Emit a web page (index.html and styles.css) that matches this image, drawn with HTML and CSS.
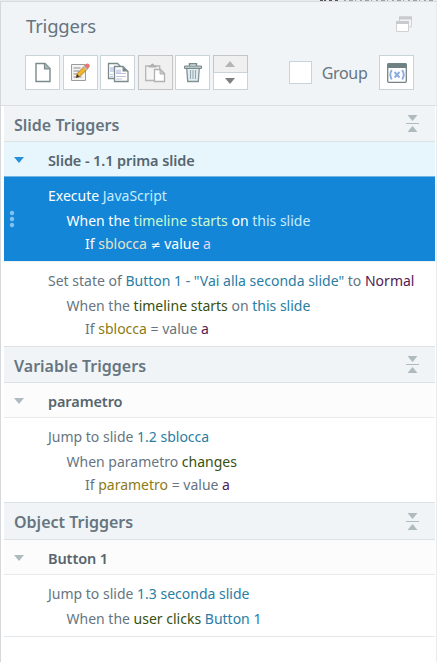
FILE: index.html
```html
<!DOCTYPE html>
<html lang="en">
<head>
  <meta charset="UTF-8">
  <meta name="viewport" content="width=device-width, initial-scale=1.0">
  <title>Triggers</title>
  <link rel="stylesheet" href="styles.css">
</head>
<body>
  <div class="window-edge">
    <svg width="117" height="2" viewBox="0 0 117 2"><path d="M0 .5h6M9 .5h4M15 .5h4" stroke="#555" stroke-dasharray="3 1"/><path d="M24 .5h90" stroke="#9aa0a5" stroke-dasharray="2 3 4 2 1 4"/></svg>
  </div>
  <div class="panel">
    <header class="panel-header">
      <div class="title-row">
        <h1>Triggers</h1>
        <svg class="float-icon" width="16" height="17" viewBox="0 0 16 17"><path d="M3.5 5V.8h12v10H13" fill="#f3f4f5" stroke="#d0d2d4"/><path d="M3 2h13" stroke="#c8cbcd" stroke-width="3"/><path d="M.5 5.5h12v10H.5z" fill="#fff" stroke="#cfd1d3"/><path d="M0 6.5h13" stroke="#c8cbcd" stroke-width="3"/></svg>
      </div>
      <div class="toolbar">
        <button class="tool" aria-label="New">
          <svg width="20" height="22" viewBox="0 0 20 22"><path d="M3 1.5h9l5 5v13H3z" fill="#fff" stroke="#7b8b8c" stroke-width="1.4"/><path d="M11.5 1.5v5.3H17" fill="#a9b4b5" stroke="#7b8b8c" stroke-width="1.2"/></svg>
        </button>
        <button class="tool" aria-label="Edit">
          <svg width="20" height="22" viewBox="0 0 20 22"><path d="M1.5 2.5h14v16h-14z" fill="#f3f3f3" stroke="#9c9c9c"/><path d="M3.5 6h7M3.5 9h6M3.5 12h4M3.5 15h8" stroke="#8c8c8c"/><path d="M7.2 11.5 15.5 3l3 3-8.4 8.2-4 1.5z" fill="#f3b52c" stroke="#9b6a20" stroke-width=".7"/><path d="m14 4.2 2.5-2.4q1.3-.8 2.5.5t.5 2.4L17 7z" fill="#ed7171"/><path d="m13.2 5 1.2-1.2L17.6 7l-1.2 1.1z" fill="#b7bfc3"/><path d="m6 15.8 1.2-3.5 2.2 2.2z" fill="#333"/></svg>
        </button>
        <button class="tool" aria-label="Copy">
          <svg width="22" height="22" viewBox="0 0 22 22"><path d="M1.5 1.5h9l4 4v11h-13z" fill="#fff" stroke="#7b8b8c" stroke-width="1.3"/><path d="M3 5h4v5H3z" fill="#d2d5ee"/><path d="M3 12.5h3M3 14.5h3" stroke="#c0c4df"/><path d="M7.5 4.5H16l5 5v10H7.500z" fill="#fff" stroke="#7b8b8c" stroke-width="1.3"/><path d="M15.5 4.5v5H21z" fill="#7b8b8c"/><path d="M9 7.5h5V12H9z" fill="#d2d5ee"/><path d="M9 11.5h10M9 14.5h10M9 17h6" stroke="#c0c4df"/></svg>
        </button>
        <button class="tool disabled" aria-label="Paste">
          <svg width="22" height="22" viewBox="0 0 22 22"><path d="M1.7 4h14v14.5h-14z" fill="#f4f4f4" stroke="#b5b5b5" stroke-width="1.3"/><path d="M4.5 5.5v-2h2.300q.3-2 1.700-2t1.700 2h2.300v2z" fill="#b0b0b0"/><path d="M10.5 7.5h6l4 4v8h-10z" fill="#fff" stroke="#b0b0b0" stroke-width="1.3"/><path d="M16 7.5V12h4.5z" fill="#ccc" stroke="#b0b0b0"/></svg>
        </button>
        <button class="tool" aria-label="Delete">
          <svg width="20" height="22" viewBox="0 0 20 22"><path d="M6.5 4V1.7h7V4" fill="none" stroke="#788a8c" stroke-width="1.4"/><path d="M3.7 6h12.6l-1 13.500H4.700z" fill="#e2edf1" stroke="#829294" stroke-width="1.3"/><path d="M1.5 4h17v2.500h-17z" fill="#b9c6c8" stroke="#788a8c"/><path d="M7.5 8v9M10 8v9M12.500 8v9" stroke="#93aab2" stroke-width="1.1"/></svg>
        </button>
        <div class="stepper">
          <button aria-label="Move up" class="disabled"><svg width="10" height="6" viewBox="0 0 10 6"><path d="M5 0l5 6H0z" fill="#b5b5b5"/></svg></button>
          <button aria-label="Move down"><svg width="10" height="6" viewBox="0 0 10 6"><path d="M0 0h10L5 6z" fill="#7f7f7f"/></svg></button>
        </div>
        <label class="group"><span class="checkbox"></span><span class="group-text">Group</span></label>
        <button class="tool" aria-label="Variables">
          <svg width="20" height="20" viewBox="0 0 20 20"><rect x=".7" y=".7" width="18.6" height="18.6" rx="1" fill="#fff" stroke="#748485" stroke-width="1.3"/><path d="M.5 .5h19V5H.5z" fill="#6f8283"/><path d="M4.800 7q-3 4.500 0 9.500M15.200 7q3 4.500 0 9.500M7.500 9l5 5.500M12.500 9l-5 5.500" fill="none" stroke="#8aacdf" stroke-width="1.9"/></svg>
        </button>
      </div>
    </header>

    <main class="trigger-list">
      <section>
        <div class="section-head first">
          <h2>Slide Triggers</h2>
          <svg class="collapse" width="13" height="17" viewBox="0 0 13 17"><path d="M1.5 0h10l-5 6zM1.5 17h10l-5-6z"/><path d="M0 8h13v1H0z"/></svg>
        </div>
        <div class="object-head active">
          <svg class="arrow" width="10" height="6" viewBox="0 0 10 6"><path d="M0 0h10L5 6z"/></svg>
          <h3>Slide - 1.1 prima slide</h3>
        </div>
        <div class="trigger selected">
          <svg class="grip" width="6" height="18" viewBox="0 0 6 18"><circle cx="3" cy="3" r="2.2"/><circle cx="3" cy="9" r="2.2"/><circle cx="3" cy="15" r="2.2"/></svg>
          <p class="action">Execute <span class="target">JavaScript</span></p>
          <p class="event">When the <span class="verb">timeline starts</span> on <span class="target">this slide</span></p>
          <p class="condition">If <span class="variable">sblocca</span> <span class="operator">≠</span> value <span class="value">a</span></p>
        </div>
        <div class="trigger">
          <p class="action">Set state of <span class="target">Button 1 - "Vai alla seconda slide"</span> to <span class="value">Normal</span></p>
          <p class="event">When the <span class="verb">timeline starts</span> on <span class="target">this slide</span></p>
          <p class="condition">If <span class="variable">sblocca</span> = value <span class="value">a</span></p>
        </div>
      </section>

      <section>
        <div class="section-head">
          <h2>Variable Triggers</h2>
          <svg class="collapse" width="13" height="17" viewBox="0 0 13 17"><path d="M1.5 0h10l-5 6zM1.5 17h10l-5-6z"/><path d="M0 8h13v1H0z"/></svg>
        </div>
        <div class="object-head">
          <svg class="arrow" width="10" height="6" viewBox="0 0 10 6"><path d="M0 0h10L5 6z"/></svg>
          <h3>parametro</h3>
        </div>
        <div class="trigger">
          <p class="action">Jump to slide <span class="target">1.2 sblocca</span></p>
          <p class="event">When parametro <span class="verb">changes</span></p>
          <p class="condition">If <span class="variable">parametro</span> = value <span class="value">a</span></p>
        </div>
      </section>

      <section>
        <div class="section-head last">
          <h2>Object Triggers</h2>
          <svg class="collapse" width="13" height="17" viewBox="0 0 13 17"><path d="M1.5 0h10l-5 6zM1.5 17h10l-5-6z"/><path d="M0 8h13v1H0z"/></svg>
        </div>
        <div class="object-head">
          <svg class="arrow" width="10" height="6" viewBox="0 0 10 6"><path d="M0 0h10L5 6z"/></svg>
          <h3>Button 1</h3>
        </div>
        <div class="trigger short">
          <p class="action">Jump to slide <span class="target">1.3 seconda slide</span></p>
          <p class="event">When the <span class="verb">user clicks</span> <span class="target">Button 1</span></p>
        </div>
      </section>
    </main>
  </div>
</body>
</html>
```
FILE: styles.css
```css
* {
  box-sizing: border-box;
}

body {
  margin: 0;
  height: 662px;
  overflow: hidden;
  background: #fff;
  color: #66757f;
  font-family: "Noto Sans", "Open Sans", sans-serif;
  font-size: 14px;
}

h1, h2, h3, p {
  margin: 0;
}

button {
  padding: 0;
  font: inherit;
}

svg {
  display: block;
  flex: none;
}

.window-edge {
  display: flex;
  justify-content: flex-end;
  height: 2px;
  background: #e8e9ea;
  border-bottom: 1px solid #d9dcde;
}

.panel {
  height: 660px;
  border-left: 1px solid #d5d8db;
  border-right: 1px solid #e9ebed;
}

/* Header */
.panel-header {
  height: 104px;
  padding: 0 22px 0 24px;
  background: #f0f4f7;
  border-bottom: 1px solid #dbdfe2;
}

.title-row {
  display: flex;
  justify-content: space-between;
  height: 53px;
  padding-top: 10px;
}

.title-row h1 {
  padding-left: 1px;
  font-size: 18.5px;
  font-weight: 400;
  line-height: 27px;
  letter-spacing: -0.2px;
}

.float-icon {
  margin: 4px 2px 0 0;
}

.toolbar {
  display: flex;
  gap: 2.5px;
}

.tool {
  display: flex;
  align-items: center;
  justify-content: center;
  width: 35px;
  height: 35px;
  background: #fff;
  border: 1px solid #c9d3da;
}

.tool.disabled {
  background: #f0f0f0;
  border-color: #c4c4c4;
}

.stepper {
  display: flex;
  flex-direction: column;
  width: 35px;
  height: 35px;
}

.stepper button {
  display: flex;
  flex: 1;
  align-items: center;
  justify-content: center;
  background: #fff;
  border: 1px solid #c9d3da;
  border-top: 0;
}

.stepper .disabled {
  background: #f0f0f0;
  border: 1px solid #c4c4c4;
  border-bottom-color: #c9d3da;
}

.group {
  display: flex;
  align-items: center;
  margin-left: auto;
  margin-right: 9px;
}

.checkbox {
  width: 23px;
  height: 23px;
  margin-right: 10px;
  background: #fff;
  border: 1px solid #c9d3da;
}

.group-text {
  font-size: 16px;
  letter-spacing: -0.3px;
}

/* Trigger list */
.trigger-list {
  margin: 0 1px 0 3px;
}

.section-head {
  display: flex;
  align-items: center;
  justify-content: space-between;
  height: 37px;
  padding: 0 16px 0 10px;
  background: #f0f4f7;
  border-top: 1px solid #dde2e6;
  border-bottom: 1px solid #dde2e6;
}

.section-head.first {
  height: 36px;
  border-top: 0;
}

.section-head.last {
  height: 38px;
}

.section-head h2 {
  padding-top: 2px;
  font-size: 16px;
  font-weight: 600;
  letter-spacing: 0;
}

.collapse {
  fill: #b0bbc0;
}

.object-head {
  display: flex;
  align-items: center;
  height: 35px;
  padding-left: 10px;
  background: #fcfcfc;
  border-bottom: 1px solid #e8eaeb;
}

.object-head.active {
  background: #e7f5fc;
  border-bottom-color: #71b5e2;
}

.object-head h3 {
  padding-top: 2px;
  margin-left: 24px;
  font-size: 14.5px;
  font-weight: 600;
  letter-spacing: -0.1px;
  color: #56656e;
}

.arrow {
  margin-top: 2px;
  fill: #b0bbc0;
}

.active .arrow {
  fill: #2690d8;
}

.trigger {
  position: relative;
  height: 84px;
  padding: 6px 0 0 44px;
  white-space: nowrap;
}

.trigger.short {
  height: 62px;
  border-bottom: 1px solid #e4e7e9;
}

.action {
  line-height: 25px;
}

.event {
  padding-left: 18.5px;
  line-height: 25px;
}

.condition {
  padding-left: 37px;
  line-height: 21px;
}

.operator {
  font-family: "DejaVu Sans", sans-serif;
  font-size: 12px;
}

.target {
  color: #2a7da4;
}

.verb {
  color: #365010;
}

.variable {
  color: #8d7a15;
}

.value {
  color: #512052;
}

.trigger.selected {
  height: 85px;
  background: #1486d8;
  border-bottom: 1px solid #eef1f3;
  color: #fff;
}

/* Drag handle in the row gutter */
.grip {
  position: absolute;
  top: 33px;
  left: 5px;
  fill: #82c1ed;
}

.selected .target {
  color: #c5ecff;
}

.selected .verb {
  color: #c9fbcf;
}

.selected .variable {
  color: #e6e2cb;
}

.selected .value {
  color: #e5d2f4;
}
```
